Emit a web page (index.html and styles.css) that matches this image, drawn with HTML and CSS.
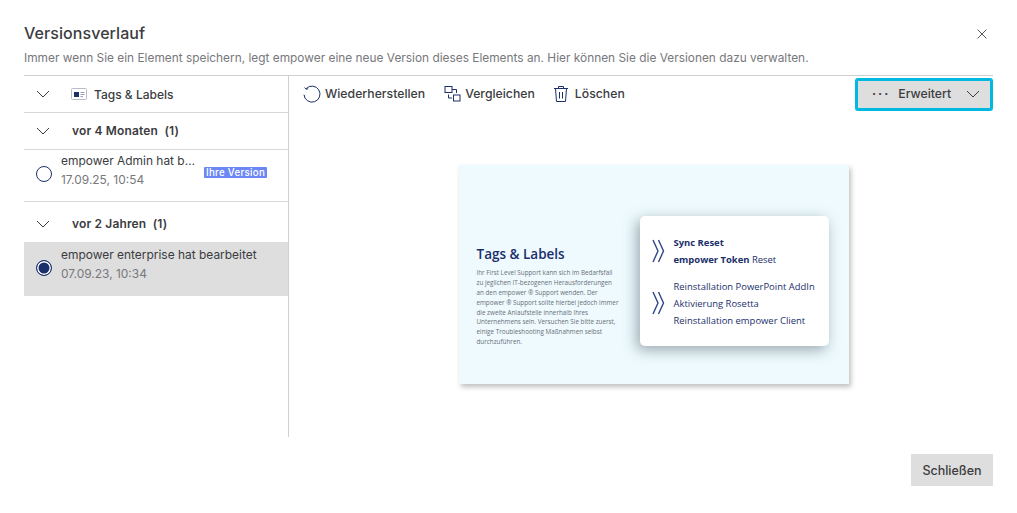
FILE: index.html
```html
<!DOCTYPE html>
<html lang="de">
<head>
  <title>Versionsverlauf</title>
  <link rel="stylesheet" href="styles.css">
</head>
<body>
  <div class="dialog">
    <div class="dialog-head">
      <h1>Versionsverlauf</h1>
      <svg class="close" width="12" height="12" viewBox="0 0 12 12"><path d="M1.5 1.5l9 9M10.5 1.5l-9 9"/></svg>
    </div>
    <p class="intro">Immer wenn Sie ein Element speichern, legt empower eine neue Version dieses Elements an. Hier können Sie die Versionen dazu verwalten.</p>

    <div class="main">
      <div class="sidebar">
        <div class="row root-row">
          <svg class="chevron" width="14" height="8" viewBox="0 0 14 8"><path d="M1 1l6 6 6-6"/></svg>
          <svg class="element-icon" width="16" height="12" viewBox="0 0 16 12">
            <rect x="0.5" y="0.5" width="15" height="11" rx="1" fill="#fff" stroke="#b9bcc6"/>
            <rect x="3" y="4" width="5" height="5" fill="#1b2f6b"/>
            <path d="M9.5 4.5h4M9.5 6.5h4M9.5 8.5h2.500" stroke="#9aa3bd"/>
          </svg>
          <span class="root-name">Tags &amp; Labels</span>
        </div>

        <div class="row group-row">
          <svg class="chevron" width="14" height="8" viewBox="0 0 14 8"><path d="M1 1l6 6 6-6"/></svg>
          <span class="group-name">vor 4 Monaten&nbsp; (1)</span>
        </div>
        <div class="version">
          <span class="radio"></span>
          <div class="version-text">
            <div class="version-title">empower Admin hat b…</div>
            <div class="version-date">17.09.25, 10:54</div>
          </div>
          <span class="badge">Ihre Version</span>
        </div>

        <div class="row group-row no-line">
          <svg class="chevron" width="14" height="8" viewBox="0 0 14 8"><path d="M1 1l6 6 6-6"/></svg>
          <span class="group-name">vor 2 Jahren&nbsp; (1)</span>
        </div>
        <div class="version selected">
          <span class="radio checked"></span>
          <div class="version-text">
            <div class="version-title">empower enterprise hat bearbeitet</div>
            <div class="version-date">07.09.23, 10:34</div>
          </div>
        </div>
      </div>

      <div class="content">
        <div class="toolbar">
          <button class="tool">
            <svg width="18" height="18" viewBox="0 0 18 18"><path d="M3.2 3.6A8 8 0 1 1 1 9.6"/><path d="M1.6 2.6l1.5 1.6 2-.4"/></svg>
            Wiederherstellen
          </button>
          <button class="tool">
            <svg width="17" height="17" viewBox="0 0 17 17"><rect x="1" y="1.5" width="7" height="6"/><rect x="9.5" y="10" width="6.5" height="6"/><path d="M8 4.500h4.500v3.500M8 13H4.500V9.500"/></svg>
            Vergleichen
          </button>
          <button class="tool">
            <svg class="trash" width="16" height="18" viewBox="0 0 16 18"><path d="M1 3.500h14M5.500 3.500V1.500h5v2M2.500 3.500l1 13h9l1-13M6.500 7v6.500M9.500 7v6.500"/></svg>
            Löschen
          </button>
          <button class="more">
            <span class="dots">···</span>
            <span class="more-label">Erweitert</span>
            <svg class="chevron" width="14" height="8" viewBox="0 0 14 8"><path d="M1 1l6 6 6-6"/></svg>
          </button>
        </div>

        <div class="preview">
          <div class="slide">
            <div class="slide-text">
              <h2>Tags &amp; Labels</h2>
              <p>Ihr First Level Support kann sich im Bedarfsfall<br>
                zu jeglichen IT-bezogenen Herausforderungen<br>
                an den empower ® Support wenden. Der<br>
                empower ® Support sollte hierbei jedoch immer<br>
                die zweite Anlaufstelle innerhalb Ihres<br>
                Unternehmens sein. Versuchen Sie bitte zuerst,<br>
                einige Troubleshooting Maßnahmen selbst<br>
                durchzuführen.</p>
            </div>
            <div class="slide-card">
              <div class="card-block">
                <svg width="13" height="24" viewBox="0 0 13 24"><path d="M1 1l5 11-5 11M6.500 1l5 11-5 11"/></svg>
                <div class="card-lines">
                  <div><b>Sync Reset</b></div>
                  <div><b>empower Token</b> Reset</div>
                </div>
              </div>
              <div class="card-block">
                <svg width="13" height="24" viewBox="0 0 13 24"><path d="M1 1l5 11-5 11M6.500 1l5 11-5 11"/></svg>
                <div class="card-lines">
                  <div>Reinstallation PowerPoint AddIn</div>
                  <div>Aktivierung Rosetta</div>
                  <div>Reinstallation empower Client</div>
                </div>
              </div>
            </div>
          </div>
        </div>
      </div>
    </div>

    <div class="dialog-foot">
      <button class="close-button">Schließen</button>
    </div>
  </div>
</body>
</html>
```

FILE: styles.css
```css
* {
  box-sizing: border-box;
}

body {
  margin: 0;
  background: #fff;
  font-family: Inter, "Liberation Sans", sans-serif;
  color: #3c3c3f;
}

button {
  font-family: inherit;
  border: none;
  background: none;
  color: inherit;
  padding: 0;
}

.dialog {
  height: 513px;
  padding: 0 24px;
  overflow: hidden;
}

.dialog-head {
  display: flex;
  justify-content: space-between;
  align-items: center;
  height: 46px;
  padding-top: 19px;
}

h1 {
  margin: 0;
  font-size: 16px;
  font-weight: 500;
  letter-spacing: 0.07px;
}

.close {
  margin-right: 5px;
  margin-top: 2px;
  fill: none;
  stroke: #55565a;
}

.intro {
  margin: 3px 0 0;
  height: 26px;
  font-size: 11.880px;
  line-height: 17px;
  color: #77787c;
}

.main {
  display: flex;
  height: 362px;
  border-top: 1px solid #d0d0d0;
}

.sidebar {
  width: 265px;
  flex: none;
  border-right: 1px solid #d0d0d0;
}

.chevron {
  flex: none;
  fill: none;
  stroke: #3c3c3f;
}

.row {
  display: flex;
  align-items: center;
  padding-left: 12px;
  border-bottom: 1px solid #d8d8d8;
}

.row.no-line {
  border-bottom: none;
  height: 40px;
  padding-top: 4px;
}

.root-row {
  height: 37px;
}

.element-icon {
  margin-left: 21px;
}

.root-name {
  margin-left: 7px;
  font-size: 12px;
  font-weight: 500;
}

.group-row {
  height: 37px;
}

.group-name {
  margin-left: 22px;
  margin-bottom: 1px;
  font-size: 12px;
  font-weight: 600;
  letter-spacing: 0.15px;
}

.version {
  display: flex;
  align-items: center;
  height: 52px;
  padding-left: 12px;
  border-bottom: 1px solid #d8d8d8;
}

.version.selected {
  height: 54px;
  background: #dedede;
  border-bottom: none;
}

.radio {
  flex: none;
  width: 16px;
  height: 16px;
  margin-bottom: 3px;
  border: 1px solid #1b2f6b;
  border-radius: 50%;
  background: #fff;
}

.radio.checked {
  margin-bottom: 2px;
  background: #1b2f6b;
  box-shadow: inset 0 0 0 1.5px #fff;
}

.version-text {
  width: 135px;
  margin-left: 9px;
  margin-bottom: 11px;
  font-size: 11.950px;
  line-height: 19px;
}

.selected .version-text {
  width: auto;
  margin-bottom: 10px;
}

.version-title {
  white-space: nowrap;
}

.version-date {
  color: #77787c;
}

.badge {
  margin-left: 8px;
  margin-bottom: 6px;
  padding: 0 2px;
  height: 11px;
  font-size: 9.700px;
  font-weight: 500;
  line-height: 11px;
  letter-spacing: 0.3px;
  white-space: nowrap;
  color: #fff;
  background: #6b87f5;
  border-radius: 1px;
}

.content {
  flex: 1;
  min-width: 0;
}

.toolbar {
  display: flex;
  align-items: center;
  height: 37px;
  padding-left: 14px;
}

.tool {
  display: flex;
  align-items: center;
  gap: 4px;
  margin-right: 19px;
  margin-top: -2px;
  font-size: 12.250px;
  font-weight: 500;
}

.tool svg {
  fill: none;
  stroke: #1b2f6b;
}

.tool .trash {
  margin: 0 2px 0 -1px;
}

.more {
  display: flex;
  align-items: center;
  width: 138px;
  height: 33px;
  margin-left: auto;
  padding: 0 0 2px 14px;
  font-size: 12.250px;
  font-weight: 500;
  background: #dedede;
  border: 3px solid #00b8e0;
  border-radius: 3px;
}

.dots {
  letter-spacing: 2px;
  font-weight: 700;
}

.more-label {
  margin-left: 8px;
  margin-right: 15px;
}

.preview {
  display: flex;
  justify-content: center;
  padding-top: 52px;
  padding-left: 25px;
}

.slide {
  display: flex;
  align-items: center;
  width: 390px;
  height: 219px;
  padding: 0 20px 0 18px;
  background: #eefafe;
  box-shadow: 2px 3px 5px rgba(0, 0, 0, 0.25);
  font-family: "Open Sans", sans-serif;
}

.slide-text {
  width: 145px;
  margin-top: 43px;
  white-space: nowrap;
}

.slide-text h2 {
  margin: 0 0 5px;
  font-size: 13.500px;
  font-weight: 600;
  color: #1b2f6b;
}

.slide-text p {
  margin: 0;
  font-size: 6.300px;
  line-height: 9.900px;
  color: #6a6f78;
}

.slide-card {
  display: flex;
  flex-direction: column;
  justify-content: center;
  gap: 10px;
  width: 189px;
  height: 130px;
  margin-left: auto;
  margin-top: 13px;
  padding-left: 12px;
  background: #fff;
  border-radius: 5px;
  box-shadow: -3px 4px 14px rgba(70, 90, 100, 0.5);
  font-size: 9.450px;
  color: #1b2f6b;
}

.card-block {
  display: flex;
  align-items: center;
  gap: 9px;
}

.card-block svg {
  flex: none;
  fill: none;
  stroke: #2e4687;
  stroke-width: 1.4;
}

.card-lines {
  line-height: 17px;
  white-space: nowrap;
}

.dialog-foot {
  display: flex;
  justify-content: flex-end;
  padding-top: 17px;
}

.close-button {
  width: 82px;
  height: 32px;
  font-size: 12.500px;
  font-weight: 500;
  background: #dedede;
}
```
